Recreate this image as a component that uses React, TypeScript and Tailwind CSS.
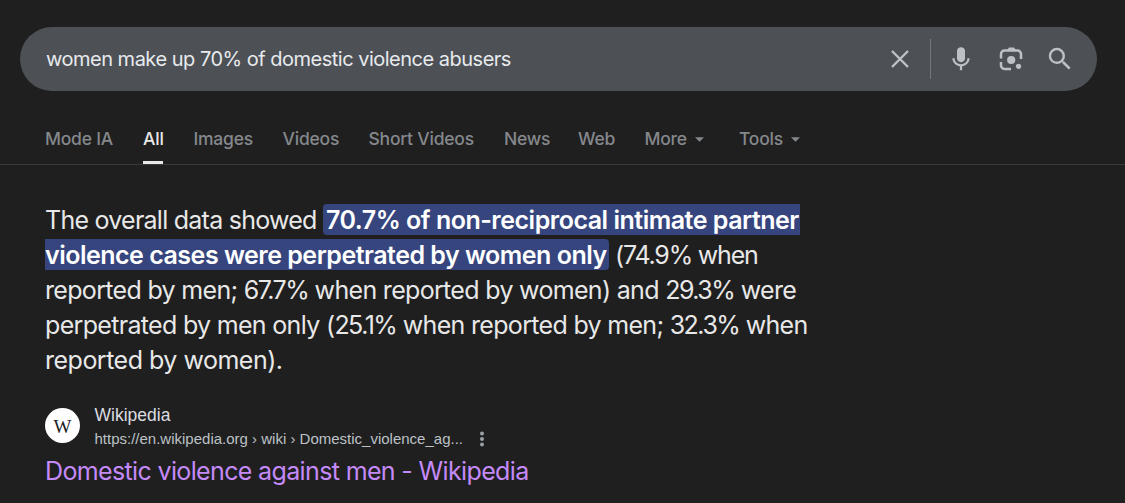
import type { ReactNode } from 'react';

interface TabProps {
  label: string;
  className: string;
  active?: boolean;
  hasMenu?: boolean;
}

const tabs: TabProps[] = [
  { label: 'Mode IA', className: 'w-[98px]' },
  { label: 'All', className: 'w-[50.5px]', active: true },
  { label: 'Images', className: 'w-[89px]' },
  { label: 'Videos', className: 'w-[86px]' },
  { label: 'Short Videos', className: 'w-[135.5px]' },
  { label: 'News', className: 'w-[74px]' },
  { label: 'Web', className: 'w-[66.5px]' },
  { label: 'More', className: 'w-[94.5px]', hasMenu: true },
  { label: 'Tools', className: 'w-[62px]', hasMenu: true },
];

function Tab(props: TabProps) {
  return (
    <div className={`shrink-0 ${props.className}`}>
      <button
        className={`relative flex h-[51px] items-center whitespace-nowrap pt-[2px] text-[17.5px] font-medium tracking-[-0.22px] ${
          props.active ? 'text-[#e8e8e8]' : 'text-[#85888c]'
        }`}
      >
        {props.label}
        {props.hasMenu && (
          <svg className="ml-2 h-[5px] w-[9px]" viewBox="0 0 10 5" fill="currentColor">
            <path d="M0 0h10L5 5z" />
          </svg>
        )}
        {props.active && <span className="absolute bottom-0 left-0 h-[3px] w-5 bg-[#e8e8e8]" />}
      </button>
    </div>
  );
}

function SearchBar() {
  return (
    <div className="ml-5 flex h-16 w-[1077px] items-center rounded-full bg-[#4d5156] pl-[26px] text-[#bdc1c6]">
      <p className="w-[845px] whitespace-nowrap text-[20px] tracking-[-0.5px] text-[#e8eaed]">
        women make up 70% of domestic violence abusers
      </p>
      <svg className="h-[18px] w-[18px]" viewBox="0 0 18 18" stroke="currentColor" strokeWidth="2.4">
        <path d="M1 1l16 16M17 1L1 17" />
      </svg>
      <span className="ml-[21px] h-10 w-px bg-[#74787c]" />
      <svg className="ml-[15px] h-[30px] w-[30px]" viewBox="0 0 24 24" fill="currentColor">
        <path d="M12 14.5c1.9 0 3.2-1.3 3.2-3.1V5.6c0-1.8-1.4-3.1-3.2-3.1S8.8 3.8 8.8 5.6v5.8c0 1.8 1.3 3.1 3.2 3.1z" />
        <path d="M18.9 11.4h-1.8c0 2.8-2.3 4.7-5.1 4.7s-5.1-1.9-5.1-4.7H5.1c0 3.2 2.6 5.9 6 6.4v3.2h1.8v-3.2c3.4-.5 6-3.2 6-6.4z" />
      </svg>
      <svg className="ml-5 h-[30px] w-[30px]" viewBox="0 0 30 30">
        <path
          d="M5 14.5V10a3.5 3.5 0 0 1 3.5-3.5h13A3.5 3.5 0 0 1 25 10v5M5 18v3.5A3.5 3.5 0 0 0 8.5 25H15"
          fill="none"
          stroke="currentColor"
          strokeWidth="2.5"
        />
        <path d="M11 6l2-2.5h5L20 6z" fill="currentColor" />
        <circle cx="15.2" cy="16" r="4.1" fill="currentColor" />
        <circle cx="22.5" cy="22.3" r="2.6" fill="currentColor" />
      </svg>
      <svg className="ml-[19px] h-[30px] w-[30px]" viewBox="0 0 24 24" fill="currentColor">
        <path d="M15.5 14h-.79l-.28-.27A6.471 6.471 0 0 0 16 9.5 6.5 6.5 0 1 0 9.5 16c1.61 0 3.09-.59 4.23-1.57l.27.28v.79l5 4.99L20.49 19l-4.99-5zm-6 0C7.01 14 5 11.99 5 9.5S7.01 5 9.5 5 14 7.01 14 9.5 11.99 14 9.5 14z" />
      </svg>
    </div>
  );
}

function Line({ className, children }: { className?: string; children: ReactNode }) {
  return <span className={`flex h-[35px] items-center whitespace-pre ${className}`}>{children}</span>;
}

function Percent({ children }: { children: ReactNode }) {
  return <span className="tracking-[-1.5px]">{children}</span>;
}

function Snippet() {
  return (
    <p className="ml-[45px] mt-[37px] text-[25px] leading-[32px] text-[#e8e8e8]">
      <Line className="tracking-[-0.75px]">
        <span className="w-[278px]">The overall data showed</span>
        <b className="h-[31px] w-[477px] rounded-l bg-[#36457e] pl-[3px] font-semibold tracking-[-0.49px] text-white">
          70.7% of non-reciprocal intimate partner
        </b>
      </Line>
      <Line className="tracking-[-1.2px]">
        <b className="h-[31px] w-[564px] rounded-r bg-[#36457e] font-semibold tracking-[-0.5px] text-white">
          violence cases were perpetrated by women only
        </b>
        <span className="ml-[6px]">(74.9% when</span>
      </Line>
      <Line className="pt-px tracking-[-0.68px]">
        reported by men; <Percent>67.7%</Percent> when reported by women) and <Percent>29.3%</Percent> were
      </Line>
      <Line className="pt-px tracking-[-0.68px]">
        perpetrated by men only (<Percent>25.1%</Percent> when reported by men; <Percent>32.3%</Percent> when
      </Line>
      <Line className="pt-px tracking-[-0.5px]">reported by women).</Line>
    </p>
  );
}

function Result() {
  return (
    <div className="ml-[45px] mt-[26px]">
      <div className="flex h-11 items-center font-['Liberation_Sans',sans-serif]">
        <div className="flex h-[35px] w-[35px] items-center justify-center rounded-full bg-white">
          <span className="pt-[2px] font-['Liberation_Serif',serif] text-[19px] leading-none text-[#202124]">W</span>
        </div>
        <div className="ml-[14.5px] w-[378.5px] whitespace-nowrap pt-[3px]">
          <p className="text-[17.5px] leading-[25px] text-[#dadce0]">Wikipedia</p>
          <p className="text-[15px] leading-[22px] text-[#bdc1c6]">
            https://en.wikipedia.org › wiki › Domestic_violence_ag...
          </p>
        </div>
        <svg className="mt-[28px] h-4 w-4" viewBox="0 0 16 16" fill="#9aa0a6">
          <circle cx="9" cy="2.5" r="2" />
          <circle cx="9" cy="8" r="2" />
          <circle cx="9" cy="13.5" r="2" />
        </svg>
      </div>
      <h3 className="mt-[7px] whitespace-nowrap text-[25px] leading-[34px] tracking-[-0.64px] text-[#c58af9]">
        Domestic violence against men - Wikipedia
      </h3>
    </div>
  );
}

function App() {
  return (
    <div className="h-[503px] w-[1125px] overflow-hidden bg-[#1f1f1f] pt-[27px] font-[Inter,sans-serif]">
      <SearchBar />
      <nav className="mt-[22px] flex h-[52px] border-b border-[#37393b] pl-[45px]">
        {tabs.map((tab) => (
          <Tab key={tab.label} {...tab} />
        ))}
      </nav>
      <Snippet />
      <Result />
    </div>
  );
}

export default App;
